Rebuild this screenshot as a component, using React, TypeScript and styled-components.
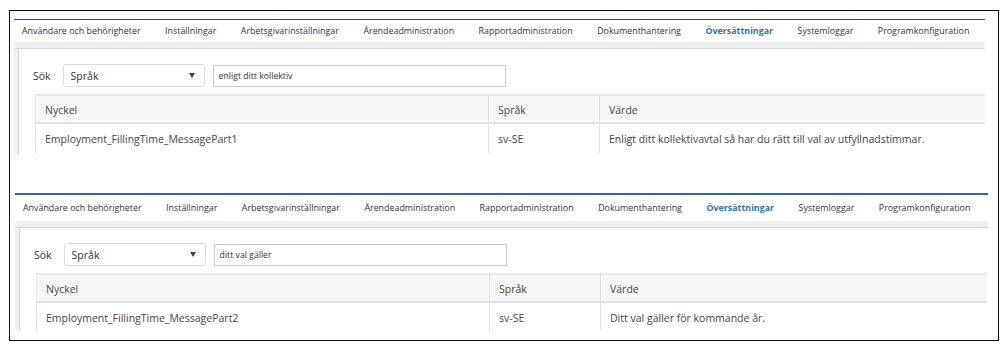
import React from 'react';
import styled, { createGlobalStyle } from 'styled-components';

const GlobalStyle = createGlobalStyle`
  body {
    margin: 0;
    background: #ffffff;
    font-family: 'Open Sans', 'DejaVu Sans', sans-serif;
  }
`;

const Frame = styled.div`
  box-sizing: border-box;
  margin: 10px 0 0 9px;
  width: 990px;
  height: 331px;
  padding: 8px 0 0 4px;
  border: 1px solid #111;
`;

const Shot = styled.div<{ $line: string; $lineWidth: number; $height: number; $width: number; $offset: number; $gap: number }>`
  width: ${(p) => p.$width}px;
  height: ${(p) => p.$height}px;
  margin-left: ${(p) => p.$offset}px;
  margin-top: ${(p) => p.$gap}px;
  overflow: hidden;
  border-top: ${(p) => p.$lineWidth}px solid ${(p) => p.$line};
`;

const Nav = styled.div<{ $height: number }>`
  display: flex;
  align-items: center;
  gap: 24.5px;
  height: ${(p) => p.$height}px;
  padding: 0 0 2px 8px;
  box-sizing: border-box;
  background: #fff;
`;

const Tab = styled.div<{ $active?: boolean }>`
  font-size: 8.9px;
  white-space: nowrap;
  color: ${(p) => (p.$active ? '#3470ae' : '#333')};
  font-weight: ${(p) => (p.$active ? 700 : 400)};
`;

const Band = styled.div`
  height: 6px;
  background: #eef0f2;
  border-bottom: 1px solid #d6d7d9;
`;

const Body = styled.div`
  padding-left: 4px;
  background: #eef0f2;
`;

const Content = styled.div`
  background: #fff;
  border-left: 1px solid #d6d7d9;
  padding: 15px 0 0 14px;
`;

const SearchRow = styled.div`
  display: flex;
  align-items: center;
`;

const Label = styled.span`
  font-size: 10.5px;
  color: #333;
  margin-right: 12px;
`;

const Select = styled.div`
  box-sizing: border-box;
  width: 142px;
  height: 23px;
  border: 1px solid #dcdcdc;
  border-radius: 3px;
  display: flex;
  align-items: center;
  justify-content: space-between;
  padding: 0 9px 0 7px;
  font-size: 10.5px;
  color: #333;
`;

const Arrow = styled.span`
  width: 0;
  height: 0;
  border-left: 3.5px solid transparent;
  border-right: 3.5px solid transparent;
  border-top: 5px solid #444;
`;

const Input = styled.div`
  box-sizing: border-box;
  margin-left: 8px;
  width: 293px;
  height: 22px;
  border: 1px solid #cacaca;
  display: flex;
  align-items: center;
  padding-left: 5px;
  font-size: 8.7px;
  color: #333;
`;

const Table = styled.div`
  margin: 7px 0 0 2px;
  width: 950px;
  border-left: 1px solid #e3e3e3;
`;

const Row = styled.div<{ $head?: boolean }>`
  display: grid;
  grid-template-columns: 452px 111px 1fr;
  height: 30px;
  box-sizing: border-box;
  background: ${(p) => (p.$head ? '#f7f7f7' : '#fff')};
  border-top: ${(p) => (p.$head ? '2px solid #e8e8e8' : 'none')};
  border-bottom: ${(p) => (p.$head ? '2px solid #e2e2e2' : 'none')};
`;

const Cell = styled.div<{ $head?: boolean }>`
  display: flex;
  align-items: center;
  padding-left: 9px;
  padding-top: ${(p) => (p.$head ? 1 : 0)}px;
  font-size: 10.5px;
  color: #444;
  white-space: nowrap;
  & + & {
    border-left: 1px solid #e3e3e3;
  }
`;

const tabs = [
  'Användare och behörigheter',
  'Inställningar',
  'Arbetsgivarinställningar',
  'Ärendeadministration',
  'Rapportadministration',
  'Dokumenthantering',
  'Översättningar',
  'Systemloggar',
  'Programkonfiguration',
];

type ShotProps = {
  line: string;
  lineWidth: number;
  navHeight: number;
  height: number;
  width: number;
  offset: number;
  gap: number;
  query: string;
  keyName: string;
  value: string;
};

const Screenshot = (p: ShotProps) => (
  <Shot $line={p.line} $lineWidth={p.lineWidth} $height={p.height} $width={p.width} $offset={p.offset} $gap={p.gap}>
    <Nav $height={p.navHeight}>
      {tabs.map((t) => (
        <Tab key={t} $active={t === 'Översättningar'}>
          {t}
        </Tab>
      ))}
    </Nav>
    <Band />
    <Body>
      <Content>
        <SearchRow>
          <Label>Sök</Label>
          <Select>
            Språk
            <Arrow />
          </Select>
          <Input>{p.query}</Input>
        </SearchRow>
        <Table>
          <Row $head>
            <Cell $head>Nyckel</Cell>
            <Cell $head>Språk</Cell>
            <Cell $head>Värde</Cell>
          </Row>
          <Row>
            <Cell>{p.keyName}</Cell>
            <Cell>sv-SE</Cell>
            <Cell>{p.value}</Cell>
          </Row>
        </Table>
      </Content>
    </Body>
  </Shot>
);

export default function App() {
  return (
    <>
      <GlobalStyle />
      <Frame>
        <Screenshot
          line="#444"
          lineWidth={1}
          navHeight={22}
          height={134}
          width={971}
          offset={0}
          gap={0}
          query="enligt ditt kollektiv"
          keyName="Employment_FillingTime_MessagePart1"
          value="Enligt ditt kollektivavtal så har du rätt till val av utfyllnadstimmar."
        />
        <Screenshot
          line="#2c69a3"
          lineWidth={2}
          navHeight={26}
          height={136}
          width={973}
          offset={1}
          gap={39}
          query="ditt val gäller"
          keyName="Employment_FillingTime_MessagePart2"
          value="Ditt val gäller för kommande år."
        />
      </Frame>
    </>
  );
}
